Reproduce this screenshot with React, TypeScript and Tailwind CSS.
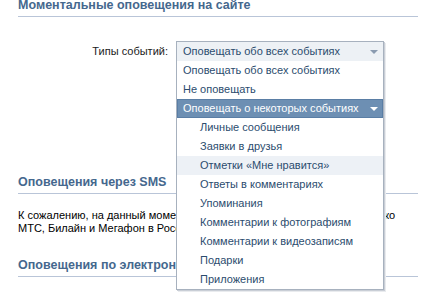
import React from "react";

const subItems = [
  "Личные сообщения",
  "Заявки в друзья",
  "Отметки «Мне нравится»",
  "Ответы в комментариях",
  "Упоминания",
  "Комментарии к фотографиям",
  "Комментарии к видеозаписям",
  "Подарки",
  "Приложения",
];

const Arrow = ({ color }: { color: string }) => (
  <svg width="8" height="4" viewBox="0 0 8 4" className="shrink-0">
    <path d="M0 0H8L4 4Z" fill={color} />
  </svg>
);

const SectionTitle = ({ text, className = "" }: { text: string; className?: string }) => (
  <h2
    className={`text-[12.5px] font-bold leading-[16px] pb-[3px] text-[#45688e] border-b border-[#b9c5d8] ${className}`}
  >
    {text}
  </h2>
);

export default function App() {
  return (
    <div
      className="w-[440px] h-[294px] overflow-hidden bg-white px-[18px] text-[11px] text-black"
      style={{ fontFamily: '"Liberation Sans", Arial, sans-serif' }}
    >
      <div className="w-[400px]">
        <SectionTitle text="Моментальные оповещения на сайте" className="-mt-[3px]" />

        {/* тип событий */}
        <div className="mt-[24px] flex items-start gap-[8px]">
          <label className="w-[150px] text-right leading-[20px] text-[#222]">Типы событий:</label>
          <div className="relative w-[208px] h-[20px]">
            <div className="absolute left-0 top-0 z-10 w-[208px] border border-[#a7b1be] bg-white shadow-[1px_1px_0_#c9ced6,2px_2px_0_#e9ebee]">
              <div className="h-[19px] bg-[#edf1f5] flex items-center justify-between pl-[6px] pr-[5px] text-[#2b4c6e]">
                <span className="leading-[19px]">Оповещать обо всех событиях</span>
                <Arrow color="#8a9bb0" />
              </div>
              <div className="h-[19px] leading-[19px] pl-[6px] text-[#2b4c6e]">Оповещать обо всех событиях</div>
              <div className="h-[19px] leading-[19px] pl-[6px] text-[#2b4c6e]">Не оповещать</div>
              <div className="h-[19px] flex items-center justify-between bg-[#6d8fb3] border border-[#5a7ea5] pl-[5px] pr-[4px] text-white">
                <span className="leading-[17px]">Оповещать о некоторых событиях</span>
                <Arrow color="#ffffff" />
              </div>
              {subItems.map((item, i) => (
                <div
                  key={item}
                  className={`h-[19px] leading-[19px] pl-[23px] text-[#2b4c6e] ${i === 2 ? "bg-[#edf1f6]" : ""}`}
                >
                  {item}
                </div>
              ))}
            </div>
          </div>
        </div>

        <SectionTitle text="Оповещения через SMS" className="mt-[113px]" />
        <p className="mt-[15px] leading-[13px] whitespace-nowrap">
          К сожалению, на данный момент сообщения через SMS доступны только
          <br />
          МТС, Билайн и Мегафон в России и Украине.
        </p>

        <SectionTitle text="Оповещения по электронной почте" className="mt-[22px]" />
      </div>
    </div>
  );
}
